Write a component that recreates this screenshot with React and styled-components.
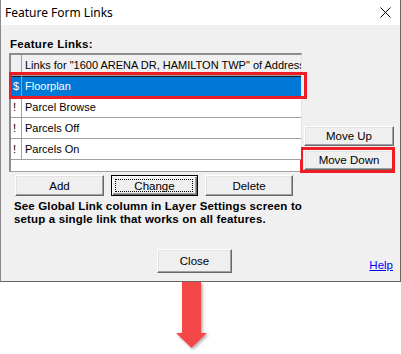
import React from 'react';
import styled, { createGlobalStyle } from 'styled-components';

const GlobalStyle = createGlobalStyle`
  html, body {
    margin: 0;
    padding: 0;
    background: #fff;
  }
  * {
    box-sizing: border-box;
  }
`;

const Page = styled.div`
  width: 401px;
  height: 354px;
  background: #fff;
  overflow: hidden;
  font-family: 'Liberation Sans', Arial, sans-serif;
  color: #000;
`;

const Window = styled.div`
  width: 401px;
  border-left: 1px solid #8a8a8a;
  border-right: 1px solid #6d645c;
  border-bottom: 1px solid #6d645c;
  background: #f0f0f0;
`;

const TitleBar = styled.div`
  height: 25px;
  background: #fff;
  display: flex;
  align-items: center;
  justify-content: space-between;
  padding: 0 9px 0 4px;
`;

const Title = styled.span`
  font-family: 'Noto Sans', 'Open Sans', sans-serif;
  font-size: 12px;
  line-height: 16px;
`;

const Body = styled.div`
  padding: 13px 5px 8px 8px;
`;

const Label = styled.div`
  font-weight: bold;
  font-size: 11.5px;
  line-height: 13px;
  letter-spacing: 0.3px;
  padding-left: 1px;
  margin-bottom: 2px;
`;

const MainRow = styled.div`
  display: flex;
  align-items: flex-end;
`;

const Grid = styled.div`
  width: 293px;
  height: 119px;
  background: #fff;
  border-top: 2px solid #8d8d8d;
  border-left: 2px solid #8d8d8d;
  border-bottom: 1px solid #a0a0a0;
  border-right: 1px solid #e3e3e3;
`;

const Row = styled.div`
  position: relative;
  display: grid;
  grid-template-columns: 11px 1fr;
  height: 21px;
  border-bottom: 1px solid #a0a0a0;
  background: ${p => (p.$header ? '#f0f0f0' : p.$selected ? '#0078d7' : '#fff')};
  color: ${p => (p.$selected ? '#fff' : '#000')};
  box-shadow: ${p => (p.$selected ? 'inset 0 1px 0 #1b1b1b' : 'none')};
  font-size: 11px;
  line-height: 20px;
  z-index: ${p => (p.$selected ? 2 : 1)};
`;

const Cell = styled.div`
  padding-left: ${p => (p.$mark ? '2px' : '3px')};
  border-right: ${p => (p.$mark ? '1px solid #a0a0a0' : 'none')};
  white-space: nowrap;
  overflow: hidden;
`;

const Callout = styled.span`
  position: absolute;
  left: -2px;
  right: -6px;
  top: -4px;
  bottom: -3px;
  border: 3px solid #ee1c24;
  pointer-events: none;
`;

const SideCol = styled.div`
  width: 90px;
  margin-left: 2px;
  padding-bottom: 2px;
  display: flex;
  flex-direction: column;
  gap: 4px;
`;

const Button = styled.button`
  position: relative;
  width: ${p => p.$w}px;
  height: ${p => p.$h || 21}px;
  padding: 0;
  margin: 0;
  background: #efefef;
  font-family: 'Liberation Sans', Arial, sans-serif;
  font-size: 11.5px;
  color: #000;
  border: 1px solid;
  border-color: ${p => (p.$focus ? '#000' : '#fff #696969 #696969 #fff')};
  box-shadow: ${p =>
    p.$focus
      ? 'inset 1px 1px 0 #fff, inset -1px -1px 0 #696969, inset -2px -2px 0 #a0a0a0'
      : 'inset -1px -1px 0 #a0a0a0, inset 1px 1px 0 #e3e3e3'};

  &::after {
    content: '';
    display: ${p => (p.$focus ? 'block' : 'none')};
    position: absolute;
    inset: 3px 4px 3px 3px;
    border: 1px dotted #000;
  }
`;

const ButtonWrap = styled.div`
  position: relative;
  display: flex;
`;

const ButtonCallout = styled.span`
  position: absolute;
  left: -4px;
  right: -1px;
  top: -3px;
  bottom: -3px;
  border: 3px solid #ee1c24;
  pointer-events: none;
`;

const ButtonRow = styled.div`
  display: flex;
  gap: 7px;
  margin-top: 3px;
  padding-left: 6px;
`;

const Note = styled.p`
  margin: 4px 0 0 5px;
  font-weight: bold;
  font-size: 11.5px;
  line-height: 13px;
  letter-spacing: 0.15px;
`;

const Footer = styled.div`
  display: flex;
  align-items: flex-end;
  margin-top: 23px;
  padding-left: 148px;
`;

const HelpLink = styled.a`
  margin-left: auto;
  margin-right: 2px;
  color: #0000ff;
  text-decoration: underline;
  font-size: 11.5px;
  line-height: 14px;
  margin-bottom: 1px;
`;

const ArrowArea = styled.div`
  padding-left: 172px;
`;

const CloseIcon = () => (
  <svg width="11" height="11" viewBox="0 0 11 11">
    <path d="M0.5 0.5 L10.5 10.5 M10.5 0.5 L0.5 10.5" stroke="#000" strokeWidth="1" fill="none" />
  </svg>
);

const DownArrow = () => (
  <svg width="44" height="70" viewBox="0 0 44 70">
    <defs>
      <filter id="sh" x="-30%" y="-10%" width="160%" height="130%">
        <feDropShadow dx="1.5" dy="1.5" stdDeviation="1.5" floodColor="#000" floodOpacity="0.35" />
      </filter>
    </defs>
    <polygon
      points="10,0 29,0 29,51 35,51 19.5,66 4,51 10,51"
      fill="#f44647"
      filter="url(#sh)"
    />
  </svg>
);

const rows = [
  { mark: '$', name: 'Floorplan', selected: true },
  { mark: '!', name: 'Parcel Browse' },
  { mark: '!', name: 'Parcels Off' },
  { mark: '!', name: 'Parcels On' },
];

export default function App() {
  return (
    <Page>
      <GlobalStyle />
      <Window>
        <TitleBar>
          <Title>Feature Form Links</Title>
          <CloseIcon />
        </TitleBar>
        <Body>
          <Label>Feature Links:</Label>
          <MainRow>
            <Grid>
              <Row $header>
                <Cell $mark />
                <Cell>Links for "1600 ARENA DR, HAMILTON TWP" of Address</Cell>
              </Row>
              {rows.map(r => (
                <Row key={r.name} $selected={r.selected}>
                  <Cell $mark>{r.mark}</Cell>
                  <Cell>{r.name}</Cell>
                  {r.selected && <Callout />}
                </Row>
              ))}
            </Grid>
            <SideCol>
              <Button $w={90} $h={20}>Move Up</Button>
              <ButtonWrap>
                <Button $w={90} $h={20}>Move Down</Button>
                <ButtonCallout />
              </ButtonWrap>
            </SideCol>
          </MainRow>
          <ButtonRow>
            <Button $w={89}>Add</Button>
            <Button $w={87} $focus>Change</Button>
            <Button $w={88}>Delete</Button>
          </ButtonRow>
          <Note>
            See Global Link column in Layer Settings screen to
            <br />
            setup a single link that works on all features.
          </Note>
          <Footer>
            <Button $w={75} $h={24}>Close</Button>
            <HelpLink href="#">Help</HelpLink>
          </Footer>
        </Body>
      </Window>
      <ArrowArea>
        <DownArrow />
      </ArrowArea>
    </Page>
  );
}
